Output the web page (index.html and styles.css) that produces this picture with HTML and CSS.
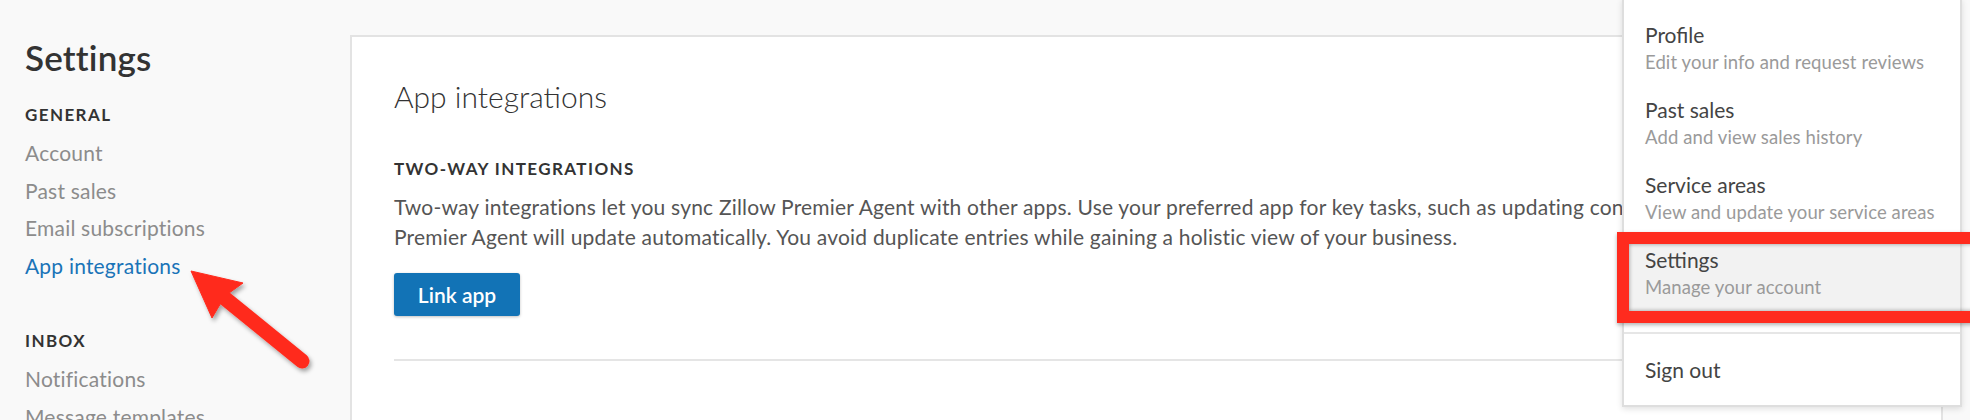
FILE: index.html
```html
<html>
<head>
  <meta charset="UTF-8">
  <title>Settings</title>
  <link rel="stylesheet" href="styles.css">
</head>
<body>

<div class="page">
  <aside class="sidebar">
    <h1>Settings</h1>
    <div class="group">
      <h4>General</h4>
      <a href="#">Account</a>
      <a href="#">Past sales</a>
      <a href="#">Email subscriptions</a>
      <a href="#" class="active">App integrations</a>
    </div>
    <div class="group">
      <h4>Inbox</h4>
      <a href="#">Notifications</a>
      <a href="#">Message templates</a>
    </div>
  </aside>

  <main class="card">
    <h2>App integrations</h2>
    <h3>Two-way integrations</h3>
    <p>Two-way integrations let you sync Zillow Premier Agent with other apps. Use your preferred app for key tasks, such as updating contacts, and<br>
    Premier Agent will update automatically. You avoid duplicate entries while gaining a holistic view of your business.</p>
    <button type="button">Link app</button>
    <hr>
  </main>
</div>

<div class="menu">
  <ul>
    <li><b>Profile</b><span>Edit your info and request reviews</span></li>
    <li><b>Past sales</b><span>Add and view sales history</span></li>
    <li><b>Service areas</b><span>View and update your service areas</span></li>
    <li class="hover"><b>Settings</b><span>Manage your account</span></li>
  </ul>
  <div class="signout"><b>Sign out</b></div>
</div>

<!-- annotations -->
<div class="callout"></div>
<svg class="arrow" width="340" height="400" viewBox="0 0 340 400">
  <defs>
    <filter id="shadow" x="-20%" y="-20%" width="140%" height="140%">
      <feDropShadow dx="2" dy="3" stdDeviation="2" flood-color="#000" flood-opacity="0.35"/>
    </filter>
  </defs>
  <g filter="url(#shadow)" fill="#ff2b1e" stroke="#ff2b1e">
    <line x1="222" y1="296" x2="302" y2="361" stroke-width="15" stroke-linecap="round"/>
    <polygon points="191,271 243,283 225,296 212,318" stroke-width="1" stroke-linejoin="round"/>
  </g>
</svg>

</body>
</html>
```

FILE: styles.css
```css
html, body { margin:0; padding:0; height:420px; overflow:hidden; }
body { background:#f9f9f9; font-family: Lato, "Open Sans", sans-serif; color:#333; }

.page { display:flex; align-items:flex-start; }

/* left nav */
.sidebar { width:325px; flex:none; padding:37px 0 0 25px; }
.sidebar h1 { font-size:35px; line-height:40px; font-weight:600; margin:0 0 28px; color:#333; letter-spacing:0.2px; }
.sidebar h4 {
  font-size:17px; line-height:20px; font-weight:700; margin:0 0 9px;
  text-transform:uppercase; letter-spacing:1.4px; color:#333;
}
.sidebar a { display:block; font-size:21px; line-height:37.5px; color:#8c8c8c; text-decoration:none; letter-spacing:0.2px; }
.sidebar a.active { color:#1a74b8; }
.sidebar .group + .group { margin-top:47px; }

/* main card */
.card {
  flex:none; width:1505px; height:420px; margin-top:35px;
  background:#fff; border:2px solid #e3e3e3; border-bottom:0;
  padding:41px 42px 0;
}
.card h2 { font-size:30px; line-height:36px; font-weight:300; margin:0 0 45px; color:#333; }
.card h3 {
  font-size:17px; line-height:20px; font-weight:700; margin:0 0 13px;
  text-transform:uppercase; letter-spacing:1.4px; color:#333;
}
.card p { font-size:21px; line-height:30px; margin:0 0 21px; color:#555; white-space:nowrap; letter-spacing:0.2px; }
.card button {
  font:600 21px/43px Lato, sans-serif; color:#fff; background:#1273b6;
  border:0; border-radius:3px; padding:0 23px; height:43px; width:126px;
  box-shadow:0 1px 3px rgba(0,0,0,0.25); cursor:pointer;
}
.card hr { border:0; border-top:2px solid #e5e5e5; margin:43px 0 0; }

/* account dropdown */
.menu {
  position:absolute; left:1622px; top:-2px; width:340px; height:409px;
  background:#fff; border:2px solid #dedede; border-top:0;
  box-shadow:0 2px 6px rgba(0,0,0,0.12); box-sizing:border-box;
}
.menu ul { list-style:none; margin:0; padding:13px 0 0; }
.menu li { padding:10px 21px 10px; height:55px; }
.menu li.hover { background:#f2f2f2; }
.menu b { display:block; font-size:21px; line-height:27px; font-weight:400; color:#444; }
.menu span { display:block; font-size:18.5px; line-height:28px; color:#9a9a9a; white-space:nowrap; letter-spacing:0.1px; }
.menu .signout { margin-top:21px; border-top:2px solid #e6e6e6; padding:22px 21px 0; }

/* screenshot annotations */
.callout {
  position:absolute; left:1617px; top:232px; width:350px; height:67px;
  border:12px solid #ff2b1e;
  box-shadow: inset 0 0 4px rgba(0,0,0,0.4), 0 2px 4px rgba(0,0,0,0.3);
}
.arrow { position:absolute; left:0; top:0; }
```
